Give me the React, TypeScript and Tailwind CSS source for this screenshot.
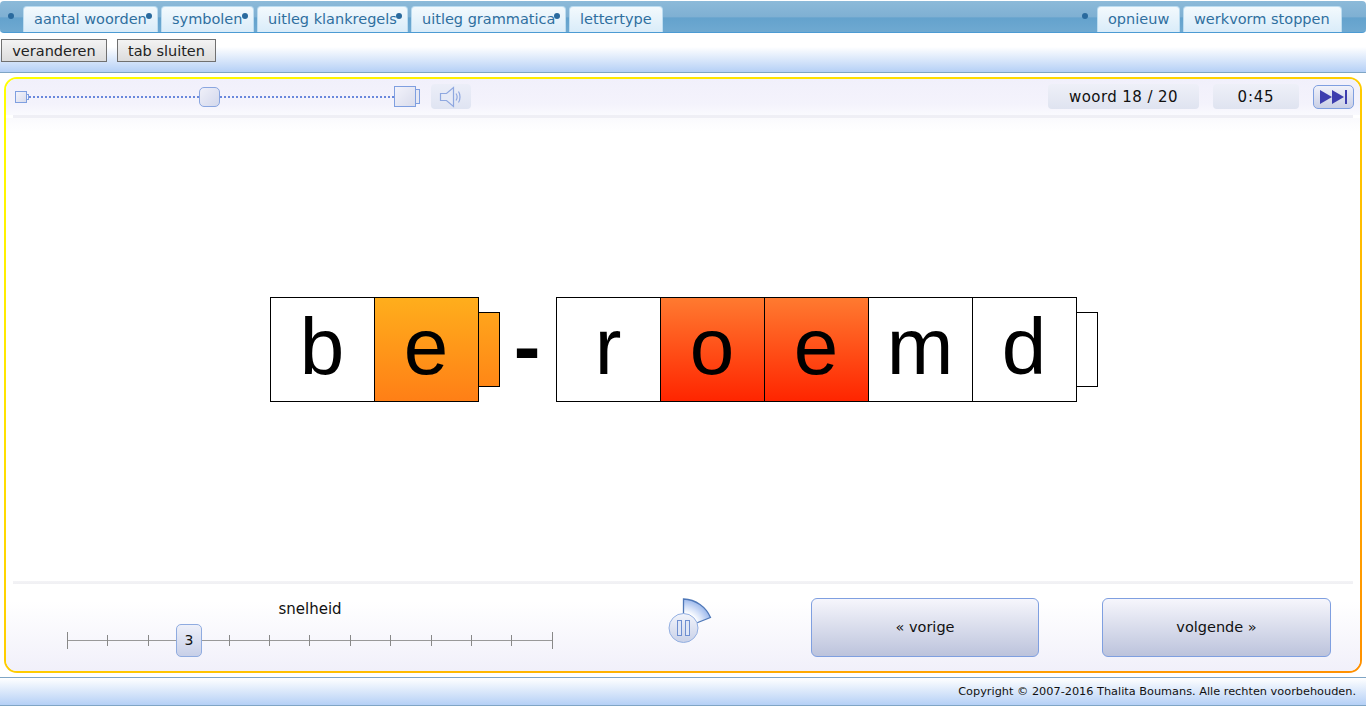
const verdana = "font-['DejaVu_Sans',sans-serif]";

function Dot({ className = "" }: { className?: string }) {
  return <span className={`absolute h-[6px] w-[6px] rounded-full bg-[#2a6a9e] ${className}`} />;
}

function Tab({ label, width, dot }: { label: string; width: string; dot?: boolean }) {
  return (
    <div className={`relative flex h-[26px] items-center rounded-t-[4px] border border-b-0 border-[#bcdcf0] bg-[linear-gradient(#f3f9fd,#d9ecf9)] pt-[1px] pl-[10px] text-[14.5px] whitespace-nowrap text-[#2f6f9f] ${width}`}>
      {label}
      {dot && <Dot className="top-[6px] right-[5px]" />}
    </div>
  );
}

function Tile({ ch, tone, nub }: { ch: string; tone?: "amber" | "red"; nub?: boolean }) {
  const bg =
    tone === "amber"
      ? "bg-[linear-gradient(#ffae1c,#ff7f16)]"
      : tone === "red"
        ? "bg-[linear-gradient(#ff7a30,#ff2500)]"
        : "bg-white";
  return (
    <div className="relative -mr-px flex h-[105px] w-[105px] items-center justify-center border border-black pb-[4px]">
      <div className={`absolute inset-0 ${bg}`} />
      <span className="relative text-[80px] leading-none text-black">{ch}</span>
      {nub && (
        <div
          className={`absolute top-[14px] left-[103px] h-[75px] w-[22px] border border-black ${
            tone === "amber" ? "bg-[linear-gradient(#ffa41c,#ff8716)]" : "bg-white"
          }`}
        />
      )}
    </div>
  );
}

function BigButton({ label, width }: { label: string; width: string }) {
  return (
    <button className={`flex h-[59px] items-center justify-center rounded-[6px] border border-[#7f9fe0] bg-[linear-gradient(#f6f6fc,#bcc3dc)] text-[14.5px] text-[#111] ${width}`}>
      {label}
    </button>
  );
}

function PauseDial() {
  return (
    <svg width="46" height="48" viewBox="0 0 46 48" className="block">
      <defs>
        <radialGradient id="sector" cx="15" cy="30" r="30" gradientUnits="userSpaceOnUse">
          <stop offset="0.5" stopColor="#ffffff" />
          <stop offset="0.72" stopColor="#d3e0f8" />
          <stop offset="1" stopColor="#96b4ea" />
        </radialGradient>
        <linearGradient id="knob" x1="0" y1="0" x2="0" y2="1">
          <stop offset="0" stopColor="#f2f4fb" />
          <stop offset="1" stopColor="#c9d1e8" />
        </linearGradient>
      </defs>
      <path d="M15.5 1 C28 1.5 38 9 42.5 19.5 L15.5 30 Z" fill="url(#sector)" stroke="#4f78b8" strokeWidth="1.3" />
      <circle cx="15.5" cy="30" r="14.5" fill="url(#knob)" stroke="#94b0e2" strokeWidth="1" />
      <rect x="9.5" y="22.5" width="4" height="15" fill="#dfe6f6" stroke="#6f8fd0" />
      <rect x="17.5" y="22.5" width="4" height="15" fill="#dfe6f6" stroke="#6f8fd0" />
    </svg>
  );
}

export default function App() {
  const ticks = Array.from({ length: 13 }, (_, i) => i);
  return (
    <div className={`flex h-[706px] w-[1366px] flex-col overflow-hidden bg-white ${verdana}`}>
      {/* top bar */}
      <header className="h-[73px] border-b border-[#7fa5c5] bg-[linear-gradient(#ffffff_0%,#ffffff_65%,#b5d0f6_100%)]">
        <div className="relative mt-px flex h-[32px] items-end rounded-[4px] border-b border-b-[#4c9bd3] bg-[linear-gradient(#8cbad9_0%,#7fb0d3_50%,#64a2cd_55%,#6fa9d1_100%)] pl-[23px]">
          <Dot className="top-[12px] left-[8px]" />
          <div className="flex gap-[3px]">
            <Tab label="aantal woorden" width="w-[135px]" dot />
            <Tab label="symbolen" width="w-[93px]" dot />
            <Tab label="uitleg klankregels" width="w-[151px]" dot />
            <Tab label="uitleg grammatica" width="w-[155px]" dot />
            <Tab label="lettertype" width="w-[94px]" />
          </div>
          <Dot className="top-[12px] left-[1082px]" />
          <div className="ml-[434px] flex gap-[3px]">
            <Tab label="opnieuw" width="w-[83px]" />
            <Tab label="werkvorm stoppen" width="w-[159px]" />
          </div>
        </div>
        <div className="mt-[6px] flex gap-[10px] pl-px">
          <button className="h-[23px] w-[106px] border border-[#707070] bg-[linear-gradient(#f3f3f3,#dcdcdc)] pt-px text-[14.5px] leading-none text-[#222]">veranderen</button>
          <button className="h-[23px] w-[99px] border border-[#707070] bg-[linear-gradient(#f3f3f3,#dcdcdc)] pt-px text-[14.5px] leading-none text-[#222]">tab sluiten</button>
        </div>
      </header>

      {/* exercise panel */}
      <main className="mx-[4px] mt-[4px] flex h-[597px] flex-col rounded-[13px] border-2 border-transparent [background:linear-gradient(#fff,#fff)_padding-box,linear-gradient(to_bottom_right,#ffff00_0%,#ffcc00_50%,#ff9000_100%)_border-box]">
        <div className="flex h-[36px] items-center rounded-t-[11px] bg-[linear-gradient(#f1f0fb,#f4f3fc_70%,#fafafe)] pr-[6px] pl-[9px]">
          <div className="flex w-[405px] items-center">
            <div className="h-[12px] w-[12px] border border-[#7f9fe0] bg-[linear-gradient(135deg,#f3f3fb,#d9dcec)]" />
            <div className="h-[6px] w-[2px] border border-l-0 border-[#7f9fe0]" />
            <div className="h-[2px] w-[170px] bg-[repeating-linear-gradient(90deg,#6a88dc_0_2px,transparent_2px_4px)]" />
            <div className="h-[20px] w-[21px] rounded-[5px] border border-[#8aa6e0] bg-[linear-gradient(135deg,#f0f0f9,#d3d8ec)]" />
            <div className="h-[2px] flex-1 bg-[repeating-linear-gradient(90deg,#6a88dc_0_2px,transparent_2px_4px)]" />
            <div className="h-[21px] w-[22px] border border-[#7f9fe0] bg-[linear-gradient(135deg,#f3f3fb,#d9dcec)]" />
            <div className="h-[15px] w-[4px] border border-l-0 border-[#7f9fe0] bg-[#e6e8f4]" />
          </div>
          <div className="ml-[11px] flex h-[25px] w-[40px] items-center justify-center rounded-[4px] bg-[linear-gradient(#eceef8,#dfe4f2)]">
            <svg width="24" height="22" viewBox="0 0 24 22" fill="none" stroke="#8fa8e0" strokeWidth="1.2">
              <path d="M1.5 7.5 H7.5 L14.5 1.5 V20.5 L7.5 14.5 H1.5 Z" fill="#e6eaf7" />
              <path d="M17 7.5 C18.3 9.5 18.3 12.5 17 14.5" />
              <path d="M19.5 5.5 C21.5 8.5 21.5 13.5 19.5 16.5" />
            </svg>
          </div>
          <div className="ml-auto flex h-[25px] w-[151px] items-center justify-center rounded-[4px] bg-[linear-gradient(#eef0f8,#dfe3f0)] text-[15px] tracking-[0.4px] text-[#111]">woord 18 / 20</div>
          <div className="ml-[14px] flex h-[25px] w-[86px] items-center justify-center rounded-[4px] bg-[linear-gradient(#eef0f8,#dfe3f0)] text-[15px] tracking-[0.8px] text-[#111]">0:45</div>
          <div className="ml-[14px] flex h-[24px] w-[41px] items-center justify-center rounded-[5px] border border-[#7f9fe0] bg-[linear-gradient(#f1f2fa,#c9cfe6)]">
            <svg width="28" height="14" viewBox="0 0 28 14" fill="#3d3dae">
              <path d="M0 0 L12 7 L0 14 Z" />
              <path d="M12 0 L24 7 L12 14 Z" />
              <rect x="25" y="0" width="2" height="14" />
            </svg>
          </div>
        </div>
        <div className="mx-[7px] h-[3px] bg-[#efeff5]" />

        {/* word */}
        <div className="flex flex-1 items-center justify-center bg-[linear-gradient(#fafafd,#ffffff_14px)] pr-[22px] pl-[1px] font-['Liberation_Sans',sans-serif]">
          <div className="flex">
            <Tile ch="b" />
            <Tile ch="e" tone="amber" nub />
          </div>
          <div className="flex w-[78px] justify-end pr-[15px] pb-[5px] text-[80px] leading-none font-bold text-black">-</div>
          <div className="flex">
            <Tile ch="r" />
            <Tile ch="o" tone="red" />
            <Tile ch="e" tone="red" />
            <Tile ch="m" />
            <Tile ch="d" nub />
          </div>
        </div>

        <div className="mx-[7px] h-[3px] bg-[linear-gradient(#f3f3f6,#f0f0f3)]" />
        {/* controls */}
        <div className="flex h-[87px] rounded-b-[11px] bg-[linear-gradient(#ffffff_20%,#f1f0fa)] pl-[61px]">
          <div className="flex w-[486px] flex-col items-center pt-[16px]">
            <span className="text-[15px] leading-[18px] text-[#111]">snelheid</span>
            <div className="relative mt-[14px] flex h-[17px] w-full items-center justify-between">
              <div className="absolute top-[8px] right-0 left-0 h-px bg-[#999]" />
              {ticks.map((i) => (
                <div key={i} className={`relative w-px bg-[#888] ${i === 0 || i === 12 ? "h-[17px]" : "h-[11px]"}`} />
              ))}
              <div className="absolute top-[-8px] left-[109px] flex h-[33px] w-[26px] items-center justify-center rounded-[5px] border border-[#8fabe0] bg-[linear-gradient(#eef0f9,#c7cfe8)] text-[14px] text-[#111]">3</div>
            </div>
          </div>
          <div className="mt-[14px] ml-[115px]">
            <PauseDial />
          </div>
          <div className="mt-[14px] ml-[97px]">
            <BigButton label="« vorige" width="w-[228px]" />
          </div>
          <div className="mt-[14px] ml-[63px]">
            <BigButton label="volgende »" width="w-[229px]" />
          </div>
        </div>
      </main>

      {/* footer */}
      <footer className="mt-[4px] flex h-[29px] items-center justify-end border-y border-[#7fa5c5] bg-[linear-gradient(#ffffff,#b5d0f6)] pt-[2px] pr-[10px] text-[11.3px] text-[#111]">
        Copyright © 2007-2016 Thalita Boumans. Alle rechten voorbehouden.
      </footer>
    </div>
  );
}
